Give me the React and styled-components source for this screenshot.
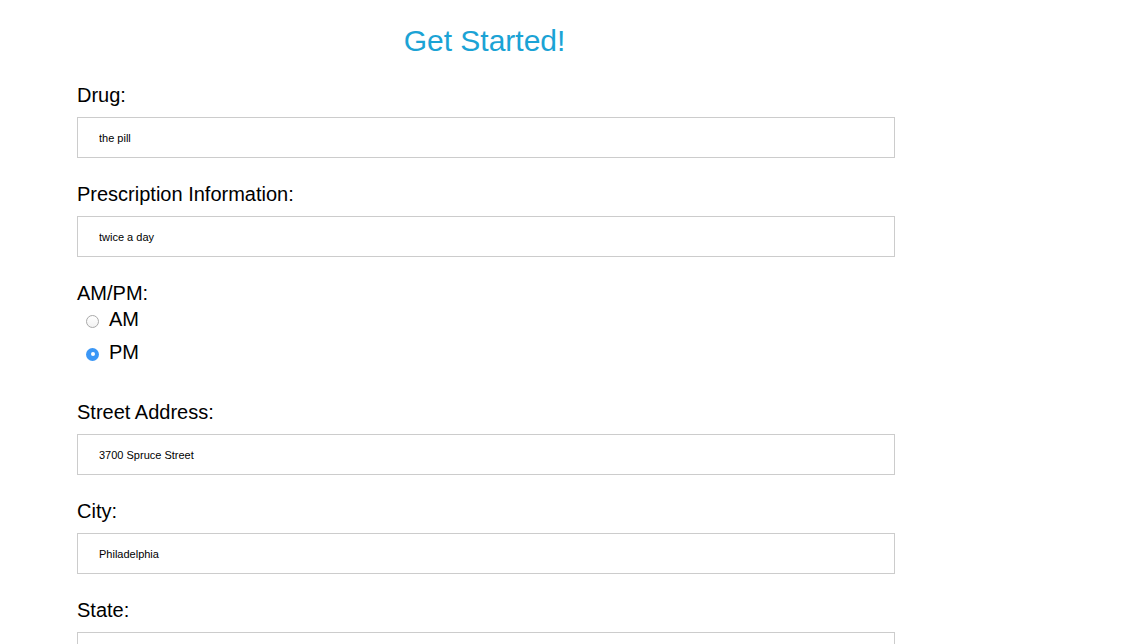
import styled, { createGlobalStyle } from 'styled-components'

const GlobalStyle = createGlobalStyle`
  html, body {
    margin: 0;
    padding: 0;
    background: #ffffff;
  }
  body {
    font-family: "Liberation Sans", Arial, Helvetica, sans-serif;
    color: #000000;
  }
`

const fields = [
  { label: 'Drug:', value: 'the pill' },
  { label: 'Prescription Information:', value: 'twice a day' },
]

const addressFields = [
  { label: 'Street Address:', value: '3700 Spruce Street' },
  { label: 'City:', value: 'Philadelphia' },
  { label: 'State:', value: '' },
]

const Field = ({ label, value }) => (
  <FieldGroup>
    <Label>{label}</Label>
    <TextInput type="text" defaultValue={value} />
  </FieldGroup>
)

const Radio = ({ label, checked }) => (
  <RadioRow>
    <RadioDot $checked={checked} />
    <RadioText>{label}</RadioText>
  </RadioRow>
)

const App = () => {
  return (
    <>
      <GlobalStyle />
      <Form>
        <Title>Get Started!</Title>
        {fields.map((f) => (
          <Field key={f.label} label={f.label} value={f.value} />
        ))}
        <RadioGroup>
          <Label>AM/PM:</Label>
          <Radio label="AM" />
          <Radio label="PM" checked />
        </RadioGroup>
        {addressFields.map((f) => (
          <Field key={f.label} label={f.label} value={f.value} />
        ))}
      </Form>
    </>
  )
}

const Form = styled.form`
  width: 818px;
  margin-left: 77px;
  padding-top: 23px;
  display: flex;
  flex-direction: column;
`

const Title = styled.h1`
  margin: 0 0 24px;
  font-size: 30px;
  line-height: 36px;
  font-weight: 400;
  color: #1ba3d5;
  text-align: center;
  padding-right: 3px;
`

const FieldGroup = styled.div`
  display: flex;
  flex-direction: column;
  margin-bottom: 24px;
`

const Label = styled.label`
  display: block;
  font-size: 20px;
  line-height: 24px;
  margin-bottom: 10px;
`

const TextInput = styled.input`
  box-sizing: border-box;
  height: 41px;
  width: 100%;
  margin: 0;
  padding: 0 21px;
  border: 1px solid #cccccc;
  border-radius: 0;
  font-family: "Liberation Sans", Arial, sans-serif;
  font-size: 11px;
  color: #000000;
  outline: none;
  background: #ffffff;
`

const RadioGroup = styled.div`
  display: flex;
  flex-direction: column;
  margin-bottom: 36px;

  & > label {
    margin-bottom: 2px;
  }
`

const RadioRow = styled.div`
  display: flex;
  align-items: center;
  height: 24px;
  margin-bottom: 9px;
  padding-left: 9px;

  &:last-child {
    margin-bottom: 0;
  }
`

const RadioDot = styled.span`
  box-sizing: border-box;
  width: 13px;
  height: 13px;
  border-radius: 50%;
  margin-right: 10px;
  margin-top: 4px;
  flex-shrink: 0;
  position: relative;
  border: ${(p) => (p.$checked ? 'none' : '1px solid #a9a9a9')};
  background: ${(p) => (p.$checked ? '#3b97f6' : 'linear-gradient(#ffffff, #f2f2f2)')};

  &::after {
    content: '';
    display: ${(p) => (p.$checked ? 'block' : 'none')};
    position: absolute;
    left: 4.5px;
    top: 4.5px;
    width: 4px;
    height: 4px;
    border-radius: 50%;
    background: #ffffff;
  }
`

const RadioText = styled.span`
  font-size: 20px;
  line-height: 24px;
`

export default App
